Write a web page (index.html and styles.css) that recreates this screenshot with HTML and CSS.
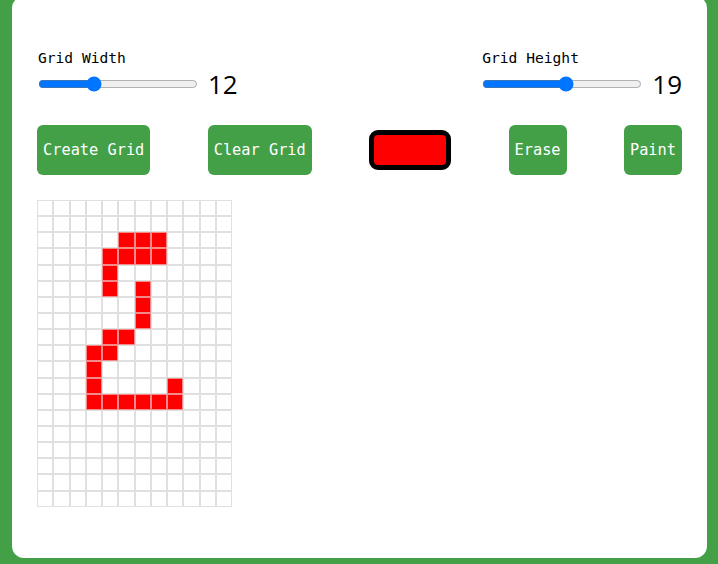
FILE: index.html
```html
<!DOCTYPE html>
<html>
<head>
<meta charset="utf-8">
<title>Pixel Art Maker</title>
<link rel="stylesheet" href="styles.css">
</head>
<body>
<div class="app">
  <div class="size-row">
    <div class="size-group">
      <label class="size-label">Grid Width</label>
      <div class="slider-line">
        <input class="slider" type="range" min="0" max="36" value="12">
        <span class="size-value">12</span>
      </div>
    </div>
    <div class="size-group">
      <label class="size-label">Grid Height</label>
      <div class="slider-line">
        <input class="slider" type="range" min="0" max="36" value="19">
        <span class="size-value">19</span>
      </div>
    </div>
  </div>
  <div class="button-row">
    <button class="btn">Create Grid</button>
    <button class="btn">Clear Grid</button>
    <div class="color-swatch"></div>
    <button class="btn">Erase</button>
    <button class="btn">Paint</button>
  </div>
  <div class="grid" id="grid"></div>
</div>
<script src="script.js"></script>
</body>
</html>
```
FILE: styles.css
```css
html, body {
  margin: 0;
  padding: 0;
  background: #43a047;
  height: 564px;
  overflow: hidden;
}
.app {
  box-sizing: border-box;
  margin: -4px 11px 0 12px;
  height: 562px;
  background: #fff;
  border-radius: 12px;
  padding: 53px 25px 0 26px;
}
.size-row {
  display: flex;
  justify-content: space-between;
}
.size-group {
  display: flex;
  flex-direction: column;
}
.size-label {
  font-family: "DejaVu Sans Mono", monospace;
  font-size: 14.6px;
  line-height: 18px;
  color: #000;
}
.slider-line {
  display: flex;
  align-items: center;
  gap: 10px;
  margin-top: 2px;
}
.slider {
  width: 160px;
  margin: 0;
  accent-color: #0075ff;
}
.size-value {
  font-family: "Open Sans", "Noto Sans", sans-serif;
  font-size: 26px;
  line-height: 30px;
  color: #000;
}
.button-row {
  display: flex;
  justify-content: space-between;
  align-items: center;
  margin-top: 26px;
  margin-left: -1px;
}
.btn {
  height: 50px;
  padding: 0 6px;
  border: none;
  border-radius: 6px;
  background: #43a047;
  color: #fff;
  font-family: "DejaVu Sans Mono", monospace;
  font-size: 15.3px;
}
.color-swatch {
  box-sizing: border-box;
  width: 82px;
  height: 40px;
  border: 5px solid #000;
  border-radius: 9px;
  background: #ff0000;
}
.grid {
  margin-top: 25px;
  margin-left: -1px;
  display: grid;
  grid-template-columns: repeat(12, 16.25px);
  grid-template-rows: repeat(19, 16.15px);
  width: max-content;
}
.cell {
  box-sizing: border-box;
  border: 1px solid #e0e0e0;
  background: #fff;
}
.cell.on {
  background: #ff0000;
  border-color: #f48a8a;
}
```
FILE: script.js
```js
var filled = {
  2: [5, 6, 7],
  3: [4, 5, 6, 7],
  4: [4],
  5: [4, 6],
  6: [6],
  7: [6],
  8: [4, 5],
  9: [3, 4],
  10: [3],
  11: [3, 8],
  12: [3, 4, 5, 6, 7, 8]
};
var grid = document.getElementById('grid');
for (var r = 0; r < 19; r++) {
  for (var c = 0; c < 12; c++) {
    var d = document.createElement('div');
    d.className = 'cell';
    if (filled[r] && filled[r].indexOf(c) !== -1) d.className += ' on';
    grid.appendChild(d);
  }
}
```
